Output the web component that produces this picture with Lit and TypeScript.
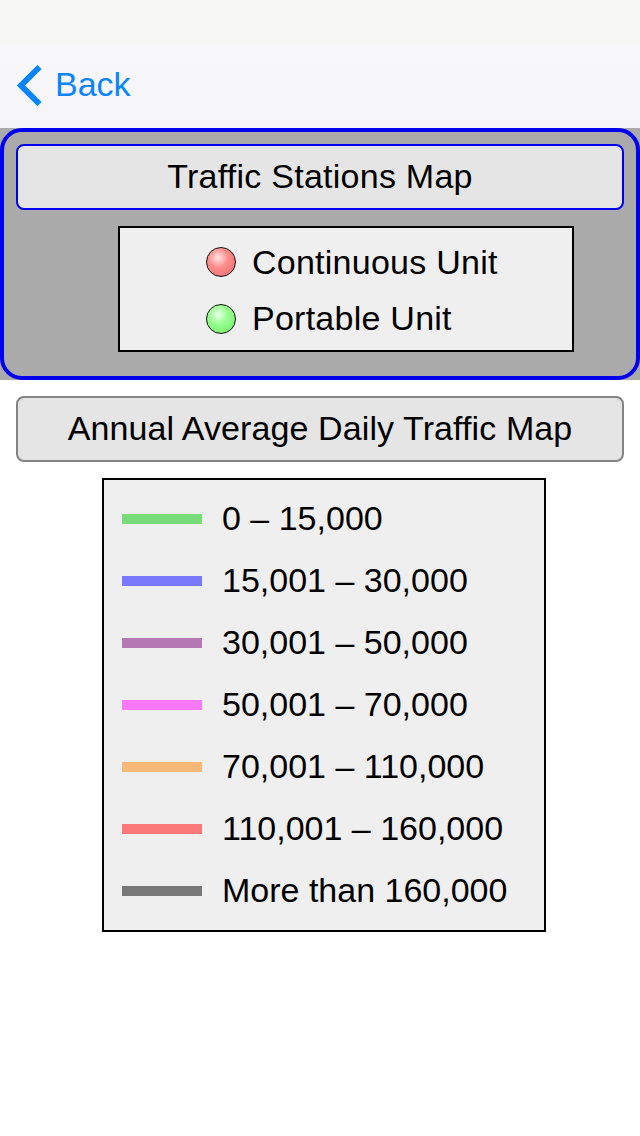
import { LitElement, html, css } from "lit";
import { customElement } from "lit/decorators.js";

const TRAFFIC = [
  { color: "#78dc78", label: "0 – 15,000" },
  { color: "#7878fa", label: "15,001 – 30,000" },
  { color: "#b478b4", label: "30,001 – 50,000" },
  { color: "#fa78fa", label: "50,001 – 70,000" },
  { color: "#f8b878", label: "70,001 – 110,000" },
  { color: "#fa7878", label: "110,001 – 160,000" },
  { color: "#787878", label: "More than 160,000" },
];

@customElement("app-root")
export class AppRoot extends LitElement {
  static styles = css`
    :host {
      display: block;
      width: 640px;
      height: 1136px;
      background: #fff;
      color: #000;
      font-family: "Liberation Sans", Arial, sans-serif;
      font-size: 34px;
      overflow: hidden;
    }
    .status {
      height: 44px;
      background: #f7f7f6;
    }
    .nav {
      height: 84px;
      box-sizing: border-box;
      display: flex;
      align-items: center;
      gap: 13px;
      padding: 0 0 2px 16px;
      background: linear-gradient(#f8f8fa, #f5f5f7);
      color: #0a84ff;
    }
    .nav svg {
      display: block;
      width: 26px;
      height: 42px;
    }
    .nav span {
      margin-bottom: 2px;
    }
    .panel {
      background: #aaa;
    }
    .panel-inner {
      height: 252px;
      box-sizing: border-box;
      border: 4px solid #0000f0;
      border-radius: 22px;
      padding: 12px;
    }
    .btn {
      height: 66px;
      box-sizing: border-box;
      display: flex;
      align-items: center;
      justify-content: center;
      padding-bottom: 2px;
      background: #e5e5e5;
      border: 2px solid #848484;
      border-radius: 8px;
      letter-spacing: 0.1px;
    }
    .btn.selected {
      border-color: #0000f0;
      letter-spacing: 0.25px;
    }
    .units {
      width: 456px;
      height: 126px;
      box-sizing: border-box;
      margin: 16px 0 0 102px;
      padding: 6px 0 0 86px;
      background: #efefef;
      border: 2px solid #000;
      letter-spacing: 0.25px;
    }
    .unit {
      height: 56.5px;
      display: flex;
      align-items: center;
      gap: 16px;
    }
    .dot {
      width: 30px;
      height: 30px;
      box-sizing: border-box;
      border: 1.5px solid #111;
      border-radius: 50%;
    }
    .dot.red {
      background: radial-gradient(circle at 40% 35%, #ffe4e4 0, #ff8c8c 40%, #e86868 100%);
    }
    .dot.green {
      background: radial-gradient(circle at 40% 35%, #eaffea 0, #96ff8c 40%, #6ce868 100%);
    }
    .content {
      padding: 16px 16px 0;
    }
    .traffic {
      width: 444px;
      height: 454px;
      box-sizing: border-box;
      margin: 16px 0 0 86px;
      padding: 8px 0 0 18px;
      background: #efefef;
      border: 2px solid #000;
    }
    .row {
      height: 62px;
      display: flex;
      align-items: center;
      gap: 20px;
    }
    .row span {
      margin-bottom: 2px;
    }
    .bar {
      width: 80px;
      height: 10px;
    }
  `;

  render() {
    return html`
      <div class="status"></div>
      <div class="nav">
        <svg viewBox="0 0 26 42">
          <path d="M23.5 3 L5 21.5 L23.5 40" fill="none" stroke="#0a84ff" stroke-width="6" />
        </svg>
        <span>Back</span>
      </div>
      <div class="panel">
        <div class="panel-inner">
          <div class="btn selected">Traffic Stations Map</div>
          <div class="units">
            <div class="unit"><div class="dot red"></div>Continuous Unit</div>
            <div class="unit"><div class="dot green"></div>Portable Unit</div>
          </div>
        </div>
      </div>
      <div class="content">
        <div class="btn">Annual Average Daily Traffic Map</div>
        <div class="traffic">
          ${TRAFFIC.map(
            (t) => html`
              <div class="row">
                <div class="bar" style="background:${t.color}"></div>
                <span>${t.label}</span>
              </div>
            `
          )}
        </div>
      </div>
    `;
  }
}
